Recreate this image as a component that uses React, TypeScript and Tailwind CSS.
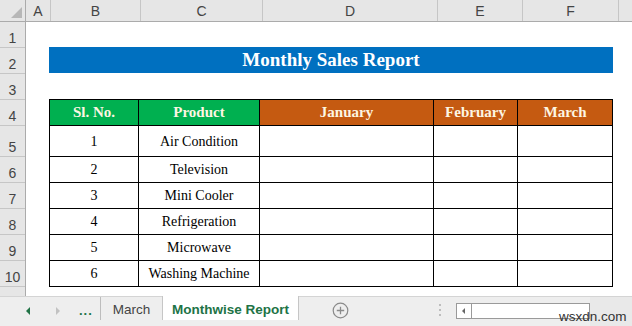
import React from "react";

const hdrFont = { fontFamily: '"Liberation Sans", Arial, sans-serif' };
const serif = { fontFamily: '"Liberation Serif", "Times New Roman", serif' };

const cols = [
  { l: "A", w: "w-[24px]" },
  { l: "B", w: "w-[89px]" },
  { l: "C", w: "w-[121px]" },
  { l: "D", w: "w-[174px]" },
  { l: "E", w: "w-[84px]" },
  { l: "F", w: "w-[95px]" },
];

const rowHeights = [
  "h-[26px]",
  "h-[26px]",
  "h-[26px]",
  "h-[26px]",
  "h-[31px]",
  "h-[26px]",
  "h-[26px]",
  "h-[26px]",
  "h-[26px]",
  "h-[26px]",
];

const data = [
  ["1", "Air Condition"],
  ["2", "Television"],
  ["3", "Mini Cooler"],
  ["4", "Refrigeration"],
  ["5", "Microwave"],
  ["6", "Washing Machine"],
];

export default function App() {
  return (
    <div className="w-[632px] h-[326px] bg-white overflow-hidden flex flex-col" style={hdrFont}>
      {/* column headers */}
      <div className="flex h-[22px] bg-[#e6e6e6] border-b border-[#ababab] text-[14px] text-[#444]">
        <div className="w-[26px] border-r border-[#ababab] relative">
          <svg width="26" height="21" className="absolute left-0 top-0">
            <polygon points="22,7 22,18 11,18" fill="#b7b7b7" />
          </svg>
        </div>
        {cols.map((c) => (
          <div
            key={c.l}
            className={`${c.w} border-r border-[#c6c6c6] flex items-center justify-center pt-[2px] box-content`}
          >
            {c.l}
          </div>
        ))}
        <div className="flex-1" />
      </div>

      {/* sheet body */}
      <div className="flex h-[274px]">
        {/* row headers */}
        <div className="w-[26px] bg-[#e6e6e6] border-r border-[#ababab] flex flex-col text-[14px] text-[#444]">
          {rowHeights.map((h, i) => (
            <div
              key={i}
              className={`${h} border-b border-[#c6c6c6] flex items-end justify-center pb-[2px] leading-none`}
            >
              {i + 1}
            </div>
          ))}
        </div>

        {/* content */}
        <div className="flex-1 flex flex-col pl-[23px]" style={serif}>
          <div
            className="mt-[25px] w-[564px] h-[26px] bg-[#0070c0] flex items-center justify-center text-white font-bold text-[19px]"
            style={serif}
          >
            Monthly Sales Report
          </div>

          <div className="mt-[26px] w-[564px] border-l border-t border-black flex flex-col">
            <div className="flex h-[26px] text-[15px] font-bold text-[#fdf6e3]" style={serif}>
              <div className="w-[89px] bg-[#00b050] border-r border-b border-black flex items-center justify-center">
                Sl. No.
              </div>
              <div className="w-[121px] bg-[#00b050] border-r border-b border-black flex items-center justify-center">
                Product
              </div>
              <div className="w-[174px] bg-[#c55a11] border-r border-b border-black flex items-center justify-center">
                January
              </div>
              <div className="w-[84px] bg-[#c55a11] border-r border-b border-black flex items-center justify-center">
                February
              </div>
              <div className="w-[95px] bg-[#c55a11] border-r border-b border-black flex items-center justify-center">
                March
              </div>
            </div>
            {data.map((r, i) => (
              <div
                key={i}
                className={`flex ${i === 0 ? "h-[31px]" : "h-[26px]"} text-[14px] text-black`}
                style={serif}
              >
                <div className="w-[89px] border-r border-b border-black flex items-center justify-center">
                  {r[0]}
                </div>
                <div className="w-[121px] border-r border-b border-black flex items-center justify-center">
                  {r[1]}
                </div>
                <div className="w-[174px] border-r border-b border-black" />
                <div className="w-[84px] border-r border-b border-black" />
                <div className="w-[95px] border-r border-b border-black" />
              </div>
            ))}
          </div>
        </div>
      </div>

      {/* sheet tabs bar */}
      <div className="flex-1 flex bg-[#eeeeee] border-t border-[#d4d4d4] relative">
        <div className="w-[100px] flex items-center h-[25px] pt-[2px]">
          <svg width="8" height="10" className="ml-[25px]">
            <polygon points="5,1 5,9 1,5" fill="#217346" />
          </svg>
          <svg width="8" height="10" className="ml-[21px]">
            <polygon points="2,1 2,9 6,5" fill="#c2c2c2" />
          </svg>
          <span className="ml-[17px] text-[#217346] font-bold text-[13px] leading-none tracking-[1px]">...</span>
        </div>
        <div className="w-px h-[23px] bg-[#bdbdbd]" />
        <div className="w-[61px] h-[25px] flex items-center justify-center pt-[2px] text-[13.5px] text-[#444]">
          March
        </div>
        <div className="-mt-px w-[137px] h-[24px] bg-white border-x border-[#c6c6c6] flex flex-col">
          <div className="flex-1 flex items-center justify-center text-[13.5px] font-bold text-[#217346] pt-[4px]">
            Monthwise Report
          </div>
          <div className="h-[2px] bg-[#217346] mx-px" />
        </div>
        <div className="w-[84px] h-[25px] flex items-center pl-[33px] pt-[1px]">
          <svg width="17" height="17" viewBox="0 0 17 17">
            <circle cx="8.5" cy="8.5" r="7.3" fill="none" stroke="#8a8a8a" strokeWidth="1.2" />
            <path d="M8.5 4.8v7.4M4.8 8.5h7.4" stroke="#8a8a8a" strokeWidth="1.3" />
          </svg>
        </div>
        <div className="w-[73px] h-[25px] flex items-center pl-[56px] pt-[1px]">
          <div className="flex flex-col gap-[3px]">
            <div className="w-[2px] h-[2px] bg-[#bdbdbd]" />
            <div className="w-[2px] h-[2px] bg-[#bdbdbd]" />
            <div className="w-[2px] h-[2px] bg-[#bdbdbd]" />
          </div>
        </div>
        <div className="mt-[6px] w-[134px] h-[16px] border border-[#9a9a9a] bg-white flex">
          <div className="w-[15px] h-full border-r border-[#9a9a9a] flex items-center justify-center">
            <svg width="6" height="8">
              <polygon points="4,1 4,7 1,4" fill="#666" />
            </svg>
          </div>
        </div>
        <div className="flex-1 bg-[#e9e9e9]" />
        <div className="absolute left-[559px] top-[13px] text-[13.5px] text-[#333] leading-none">wsxdn.com</div>
      </div>
    </div>
  );
}
